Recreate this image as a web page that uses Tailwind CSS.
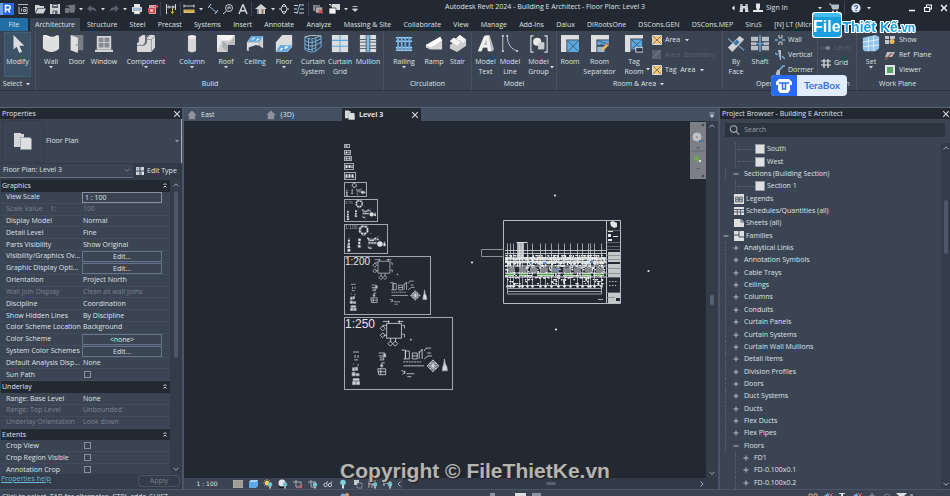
<!DOCTYPE html>
<html lang="en">
<head>
<meta charset="utf-8">
<title>Autodesk Revit 2024</title>
<script src="https://cdn.jsdelivr.net/npm/@tailwindcss/browser@4"></script>
</head>
<body class="h-screen overflow-hidden bg-[#3b4453] text-[7px] leading-[10px] text-[#dfe2e6] font-['Open_Sans','Noto_Sans',sans-serif]">
<svg class="hidden">
  <defs>
    <symbol id="caret" viewBox="0 0 8 8"><path d="M2 3h4L4 5.500z" fill="#d5d8dc"/></symbol>
    <symbol id="x" viewBox="0 0 8 8"><path d="M1.200 1.200l5.600 5.600M6.800 1.200L1.200 6.800" stroke="#d5d8dc" stroke-width="1.100"/></symbol>
    <symbol id="up" viewBox="0 0 8 8"><path d="M1.500 5.300L4 2.800l2.500 2.500" fill="none" stroke="#a5adb8" stroke-width="1"/></symbol>
    <symbol id="down" viewBox="0 0 8 8"><path d="M1.500 2.800L4 5.300l2.500-2.500" fill="none" stroke="#a5adb8" stroke-width="1"/></symbol>
    <symbol id="collapse" viewBox="0 0 8 8"><path d="M2.500 3L4 1.500 5.500 3M2.500 5.500L4 4l1.500 1.500" fill="none" stroke="#d5d8dc" stroke-width="1"/></symbol>
    <symbol id="house" viewBox="0 0 10 10"><path d="M5 .5L.3 5h1.500v4.200h6.400V5h1.500z" fill="#8d939c"/></symbol>
    <symbol id="plan" viewBox="0 0 18 18"><path d="M0 1h7v1h3v13H0z" fill="#d4d5d7"/><path d="M6.500 5.500H16l1.500 1.500v10.500h-11z" fill="#dedfe0" stroke="#8d939c" stroke-dasharray="1.500 1"/></symbol>
    <symbol id="area" viewBox="0 0 10 10"><path d="M.5.5h9v9h-9z" fill="#efc77c" stroke="#d9dbde"/><path d="M1 1l8 8M9 1L1 9" stroke="#7d6a45" stroke-width=".8"/></symbol>
    <symbol id="bulb" viewBox="0 0 10 10"><circle cx="7" cy="5.500" r="2.300" fill="#6ec3d0"/><path d="M6.300 7.500h1.500v2H6.300z" fill="#d8dadd"/></symbol>
    <symbol id="sheet" viewBox="0 0 108 73">
      <g fill="none" stroke="#d9dcdf" stroke-width=".8">
        <path d="M42 6h15v15H42zM44 3v3M55 3v3M38 4h7M53 4h6M58 8h2v3M58 17h2v3M42 8h-4v1M42 18h-3M46 21v4M51 21v4"/>
        <path d="M38 8.500l2.500 2.500-2.500 2.500-2.500-2.500zM38 15.500l2.500 2.500-2.500 2.500-2.500-2.500zM45.700 24l2.500 2.500-2.500 2.500-2.500-2.500zM50.700 24l2.500 2.500-2.500 2.500-2.500-2.500z"/>
        <path d="M57 33h4v9h-2M61 34h4v8h-4zM68 36h5v6h-5zM68 39h5M75 34v8M75 36l3-4v10M80 34l2-3h5M80 42l4-3h4M83 36h4M57 54l4 1-3 3M62 57h8M63 60h4M60 55v2"/>
        <path d="M59 45h18" stroke-dasharray="2 .7"/><path d="M59 49h21"/>
        <path d="M8 35h6M10 38v3M13 38v3M9 43h4M8 47h1M13 47v2"/>
        <path d="M34 36h6v3h-6M35 41h4v2h-4M40 46h-3v3M33 52h8v6h-7zM36 52v6M33 55h8"/>
        <path d="M89 43l6 6-6 6-6-6zM86 46h6v6h-6zM89 43v12M83 49h12M86 52l6-6M86 46l6 6"/>
      </g>
      <path d="M7.500 51h2v3h-2zM10.500 50.500h2v3h-2zM7 56h3v3H7zM11 57h3v2h-3zM8 62h6v2H8zM7.500 65h3v3h-3zM11.500 65h3v3h-3zM36 48h2v2h-2zM39 37h2v3h-2zM87.500 47h3v4h-3zM100.500 42l1 5 1.500 3 .5 4h-5l.5-4 1-3zM66 22h1v1h-1z" fill="#d9dcdf"/>
    </symbol>
  </defs>
</svg>

<div class="flex h-full flex-col">
  <!-- Title bar -->
  <header class="flex h-[18px] shrink-0 items-center bg-[#222933]">
    <div class="flex w-[360px] shrink-0 items-center">
      <button class="w-[15px]" aria-label="Revit menu"><svg class="h-3.5 w-3.5" viewBox="0 0 14 14"><path d="M0 1h14v12H0z" fill="#2469e0"/><path d="M0 1h3v12H0z" fill="#6aa0f0"/><path d="M5.500 10.500v-7h2.700a2 2 0 010 4H5.500M8 7.500l2 3" fill="none" stroke="#fff" stroke-width="1.500"/></svg></button>
      <button class="mr-0.5 flex w-[15px] justify-center" aria-label="Home"><svg class="h-3 w-3" viewBox="0 0 12 12" fill="none" stroke="#b5bac1"><path d="M1 1.500h10M2 3.500v7h8v-6H6M4.500 5.500v3M6.500 6.500h2v2h-2z"/></svg></button>
      <button class="flex w-[15px] justify-center" aria-label="Open"><svg class="h-3 w-3" viewBox="0 0 12 12" fill="#cfd1d4"><path d="M1 2h4l1 1h4v2H3.500L1 10z"/><path d="M4 5.500h8L9.500 10.500H1.500z"/></svg></button>
      <button class="flex w-[15px] justify-center" aria-label="Save"><svg class="h-3 w-3" viewBox="0 0 12 12"><path d="M1 1h10v10H1z" fill="#cfd1d4"/><path d="M3 1h6v4H3zM3.500 7.500h5V11h-5z" fill="#5d636c"/><path d="M4 2h4v1H4zM4.500 8.500h1.500V11H4.500z" fill="#cfd1d4"/></svg></button>
      <button class="flex w-[15px] justify-center" aria-label="Synchronize"><svg class="h-3 w-3" viewBox="0 0 12 12" fill="#6f757f"><path d="M1 5h4v5H1zM5 2h5v3H5z"/><circle cx="8" cy="7" r="3"/><path d="M10 1l1 5M2 3h3" stroke="#6f757f"/></svg></button>
      <svg class="h-2 w-2"><use href="#caret"/></svg>
      <button class="flex w-3.5 justify-center" aria-label="Undo"><svg class="h-2.5 w-2.5" viewBox="0 0 10 10"><path d="M4 1L0 4.500 4 8V5.800c3 0 4 .7 5.500 2.200C9.500 5 7.500 3.300 4 3.200z" fill="#5b626d"/></svg></button>
      <svg class="h-2 w-2"><use href="#caret"/></svg>
      <button class="flex w-3.5 justify-center" aria-label="Redo"><svg class="h-2.5 w-2.5" viewBox="0 0 10 10"><path d="M6 1l4 3.500L6 8V5.800c-3 0-4 .7-5.500 2.200C.5 5 2.500 3.300 6 3.200z" fill="#5b626d"/></svg></button>
      <svg class="h-2 w-2"><use href="#caret"/></svg>
      <button class="flex w-4 justify-center" aria-label="Print"><svg class="h-3 w-3" viewBox="0 0 12 12"><path d="M3 1h6v3H3z" fill="#e6e6e6"/><path d="M1 4h10v5H1z" fill="#d2d4d6"/><path d="M2 5.500h8v1H2z" fill="#4fa5dd"/><path d="M3 7.500h6V11H3z" fill="#f2f2f2" stroke="#888" stroke-width=".5"/></svg></button>
      <button class="flex w-[15px] justify-center" aria-label="Export PDF"><svg class="h-3 w-3" viewBox="0 0 12 12"><path d="M2 2h7v9H2z" fill="#d9a0a4"/><path d="M1 5h7v5H1z" fill="#d04b54"/><path d="M3 6.500h3v2H3z" fill="#f0d5d7"/><path d="M7 3.500h4M9 1.500l2 2-2 2" stroke="#e05a62" fill="none"/></svg></button>
      <i class="mr-px h-3.5 w-px bg-[#3b4453]"></i>
      <button class="flex w-[18px] justify-center" aria-label="Measure"><svg class="h-3 w-3" viewBox="0 0 12 12" fill="none" stroke="#cfd1d4"><path d="M1.500 1v10M10.500 1v6M2 4h8M8 2.500v3M4 2.500v3"/><path d="M7.500 5v5M6 8.500l1.500 2L9 8.500" stroke="#e0b25a"/></svg></button>
      <i class="h-3.5 w-px bg-[#3b4453]"></i>
      <button class="flex w-4 justify-center" aria-label="Ruler"><svg class="h-3 w-3" viewBox="0 0 12 12"><path d="M1 3h10M1 1.500v3M11 1.500v3" stroke="#cfd1d4"/><path d="M.5 6.500h11v3.500H.5z" fill="#e6bd68"/><path d="M3 7v1.500M5 7v1.500M7 7v1.500M9 7v1.500" stroke="#7a5c20" stroke-width=".6"/></svg></button>
      <svg class="h-2 w-2"><use href="#caret"/></svg>
      <button class="flex w-[15px] justify-center" aria-label="Aligned dimension"><svg class="h-3 w-3" viewBox="0 0 12 12" fill="none"><path d="M2.500 3.500l7 6" stroke="#7db6df"/><path d="M1 5l3-4M8 11l3-4" stroke="#cfd1d4"/></svg></button>
      <button class="flex w-[15px] justify-center" aria-label="Tag"><svg class="h-3 w-3" viewBox="0 0 12 12" fill="none" stroke="#cfd1d4"><circle cx="7" cy="5" r="3.500"/><path d="M6 6.500V4h2v2M4.500 8L1 11"/></svg></button>
      <button class="flex w-[15px] justify-center" aria-label="Text"><svg class="h-3 w-3" viewBox="0 0 12 12" fill="none" stroke="#d5d8dc" stroke-width="1.400"><path d="M2 11l3.700-9h.6L10 11M3.500 7.800h5"/></svg></button>
      <i class="mx-px h-3.5 w-px bg-[#3b4453]"></i>
      <button class="flex w-4 justify-center" aria-label="Default 3D view"><svg class="h-3 w-3" viewBox="0 0 12 12"><path d="M6 1L0 6h2v5h8V6h2z" fill="#cfd1d4"/><path d="M6.500 6h2v5h-2z" fill="#a4753d"/><path d="M2 6h2v5H2z" fill="#888d95"/></svg></button>
      <svg class="h-2 w-2"><use href="#caret"/></svg>
      <button class="flex w-3.5 justify-center" aria-label="Section"><svg class="h-3 w-3" viewBox="0 0 12 12" fill="none" stroke="#cfd1d4"><circle cx="6" cy="6" r="3"/><path d="M6 1l2 2M6 1L4 3M4 9l2 2 2-2M1 6h2M9 6h2"/></svg></button>
      <button class="flex w-4 justify-center" aria-label="Thin lines"><svg class="h-3 w-3" viewBox="0 0 12 12" fill="none" stroke="#cfd1d4"><path d="M1 2.500h4M1 6h3M1 9.500h4M6 2h5M7 6h4M6 10h5" /><path d="M7 1L4 11" stroke="#7db6df"/></svg></button>
      <i class="mx-px h-3.5 w-px bg-[#3b4453]"></i>
      <button class="flex w-4 justify-center" aria-label="Close inactive views"><svg class="h-3 w-3" viewBox="0 0 12 12"><path d="M1 2h7v6H1z" fill="#7e848c"/><path d="M3.500 4h7v6h-7z" fill="#a9adb3" stroke="#222933" stroke-width=".6"/><path d="M6.500 6.500l4 4M10.500 6.500l-4 4" stroke="#dc4c4c" stroke-width="1.300"/></svg></button>
      <button class="flex w-4 justify-center" aria-label="Switch windows"><svg class="h-3 w-3" viewBox="0 0 12 12"><path d="M4 1h8v6H4z" fill="#d9dbdd"/><path d="M1 5h7v6H1z" fill="#f2f2f2" stroke="#222933" stroke-width=".7"/><path d="M1 1.500h2v2" stroke="#d9dbdd" fill="none"/></svg></button>
      <svg class="h-2 w-2"><use href="#caret"/></svg>
      <svg class="h-2.5 w-2.5" viewBox="0 0 10 10"><path d="M2.500 2.500h5M2.500 5h5L5 7.500z" stroke="#d5d8dc" fill="#d5d8dc" stroke-width=".8"/></svg>
    </div>
    <h1 class="flex-1 pb-1 text-center whitespace-nowrap">Autodesk Revit 2024 - Building E Architect - Floor Plan: Level 3</h1>
    <div class="flex w-[220px] shrink-0 items-center pb-0.5">
      <svg class="h-2 w-2" viewBox="0 0 8 8"><path d="M4.500 1.500v5L2 4z" fill="#fff"/></svg>
      <button class="flex w-3 justify-center" aria-label="Search help"><svg class="h-2.5 w-2.5" viewBox="0 0 10 10" fill="#cfd1d4"><path d="M1.500 1h2v2h3V1h2l1 8H6V5.500H4V9H.500z"/></svg></button>
      <button class="ml-0.5 flex items-center gap-0.5"><svg class="h-3 w-3" viewBox="0 0 12 12" fill="#e4e5e7"><path d="M4 1.500h4v4L7 8h4v2H1V8h4L4 5.500z"/></svg>Sign In</button>
      <svg class="ml-7 h-2 w-2"><use href="#caret"/></svg>
      <button class="ml-1 flex w-3 justify-center" aria-label="App store"><svg class="h-2.5 w-2.5" viewBox="0 0 10 10"><path d="M0 1h2l1.500 5H9l1-4H3" fill="#a9bcd0" stroke="#cfd1d4" stroke-width=".8"/><circle cx="4" cy="8.500" r="1" fill="#cfd1d4"/><circle cx="8" cy="8.500" r="1" fill="#cfd1d4"/></svg></button>
      <i class="ml-1 h-3.5 w-px bg-[#3b4453]"></i>
      <button class="ml-1.5 flex w-2.5 justify-center" aria-label="Help"><svg class="h-2.5 w-2.5" viewBox="0 0 10 10"><circle cx="5" cy="5" r="4.600" fill="#dfe7f2"/><path d="M3.500 4a1.500 1.500 0 113 0c0 1-1.500 1-1.500 2.200M5 7v1.200" fill="none" stroke="#33558c" stroke-width="1.200"/></svg></button>
      <svg class="ml-1 h-2 w-2"><use href="#caret"/></svg>
      <div class="ml-auto flex items-center gap-2 pr-0.5">
        <button aria-label="Minimize"><svg class="h-2 w-2" viewBox="0 0 8 8"><path d="M1 6.500h6" stroke="#fff" stroke-width="1.500"/></svg></button>
        <button aria-label="Restore"><svg class="h-2 w-2" viewBox="0 0 8 8"><path d="M.6 3.500h5v4h-5zM2.500 3V1h5v4H6" fill="none" stroke="#fff" stroke-width="1.100"/></svg></button>
        <button aria-label="Close"><svg class="h-2 w-2" viewBox="0 0 8 8"><path d="M1 1l6 6M7 1L1 7" stroke="#fff" stroke-width="1.300"/></svg></button>
      </div>
    </div>
  </header>

  <!-- Ribbon tabs -->
  <nav class="flex h-[13px] shrink-0 items-stretch bg-[#222933] leading-[13px] whitespace-nowrap">
    <button class="mr-0.5 w-7 bg-[#1f6ea6]">File</button>
    <button class="w-[50px] bg-[#3b4453]">Architecture</button>
    <div class="flex w-[738px] justify-between pl-[7px]">
      <button>Structure</button>
      <button>Steel</button>
      <button>Precast</button>
      <button>Systems</button>
      <button>Insert</button>
      <button>Annotate</button>
      <button>Analyze</button>
      <button>Massing &amp; Site</button>
      <button>Collaborate</button>
      <button>View</button>
      <button>Manage</button>
      <button>Add-Ins</button>
      <button>Dalux</button>
      <button>DiRootsOne</button>
      <button>DSCons.GEN</button>
      <button>DSCons.MEP</button>
      <button>SiruS</button>
      <button>[N] LT (Micro)</button>
    </div>
  </nav>

  <!-- Ribbon -->
  <section class="flex h-[60px] shrink-0 border-b border-[#2c343f] whitespace-nowrap">
    <div class="flex w-[36px] shrink-0 flex-col border-r border-[#4a5362]">
      <div class="flex min-h-0 flex-1 justify-center pt-px">
        <button class="flex w-[27px] flex-col items-center border border-[#456076] bg-[#3c5266] pt-0.5"><svg class="h-[18px] w-[18px]" viewBox="0 0 20 20"><path d="M5 0v16l3.500-3 3 7 3-1.300-3-6.700H17z" fill="#dcdddf"/></svg>
        <span class="mt-1">Modify</span></button>
      </div>
      <button class="flex h-[13px] shrink-0 items-center justify-center gap-0.5">Select <svg class="h-2 w-2"><use href="#caret"/></svg></button>
    </div>

    <div class="flex shrink-0 flex-col border-r border-[#4a5362] pl-px">
      <div class="flex min-h-0 flex-1 items-start pt-1">
        <button class="flex w-7 flex-col items-center"><svg class="h-[18px] w-[18px]" viewBox="0 0 20 20"><path d="M1 0c4 3 13 4 18 1v14c-4 5-13 5-18 0z" fill="#dedfe0"/><path d="M1 0l3-.5C9 3 14 2.500 17 0l2 1C14 4 6 4 1 0z" fill="#fff"/></svg><span class="mt-1">Wall</span><svg class="-mt-1 h-2 w-2"><use href="#caret"/></svg></button>
        <button class="flex w-6 flex-col items-center"><svg class="h-[18px] w-[18px]" viewBox="0 0 20 20"><path d="M3 0h14v17H3z" fill="#7a7f86"/><path d="M3 0l8 3v17l-8-3z" fill="#dedfe0"/><circle cx="9.500" cy="11" r=".8" fill="#666"/></svg><span class="mt-1">Door</span></button>
        <button class="flex w-[30px] flex-col items-center"><svg class="h-[18px] w-[18px]" viewBox="0 0 20 20"><path d="M2 1h16v15H2zM0 16.500h20V19H0z" fill="#d2d3d5"/><path d="M4 3h5.500v5H4zM10.500 3H16v5h-5.500zM4 9h5.500v5H4zM10.500 9H16v5h-5.500z" fill="#868b93"/></svg><span class="mt-1">Window</span></button>
        <button class="flex w-[54px] flex-col items-center"><svg class="h-[18px] w-[18px]" viewBox="0 0 20 20"><path d="M2 3l4-3h3v8l-2 3H0V9l2-1zM11 3l3-3h5l1 1v13l-4 5H1l-1-1v-6h8l3-3z" fill="#d8d9db"/><path d="M0 11.500h7.500l2.500-3V2l2-2M20 1l-4 4h-5M16 5v14" fill="none" stroke="#8d9299"/></svg><span class="mt-1">Component</span><svg class="-mt-1 h-2 w-2"><use href="#caret"/></svg></button>
        <button class="flex w-[38px] flex-col items-center"><svg class="h-[18px] w-[18px]" viewBox="0 0 20 20"><path d="M5.500 2v15c1 3 8 3 9 0V2z" fill="#d6d7d9"/><ellipse cx="10" cy="2" rx="4.500" ry="2" fill="#efefef"/></svg><span class="mt-1">Column</span><svg class="-mt-1 h-2 w-2"><use href="#caret"/></svg></button>
        <button class="flex w-[30px] flex-col items-center"><svg class="h-[18px] w-[18px]" viewBox="0 0 20 20"><path d="M0 0h20v11h-8v8H0z" fill="#cbccce"/><path d="M0 0l6 6-6 13z" fill="#e9e9ea"/><path d="M0 0h20l-5 6H6z" fill="#f6f6f6"/><path d="M6 6l6 5v8l-6-5z" fill="#aeb0b3"/><path d="M20 0v11h-8z" fill="#b9bbbe"/></svg><span class="mt-1">Roof</span><svg class="-mt-1 h-2 w-2"><use href="#caret"/></svg></button>
        <button class="flex w-7 flex-col items-center"><svg class="h-[18px] w-[18px]" viewBox="0 0 20 20"><path d="M1 8l5-7h13v14l-4-3V8z" fill="#cfd0d2"/><path d="M1 8h14v4l-4-1-8 3v4l-2-1z" fill="#dedfe0"/><path d="M2 7.500L6.500 1H19l-4 6.500z" fill="#63a9dc"/><path d="M6 5l2-2h2L8 5zM11 6l2-2h2l-2 2z" fill="#fff"/></svg><span class="mt-1">Ceiling</span></button>
        <button class="flex w-[30px] flex-col items-center"><svg class="h-[18px] w-[18px]" viewBox="0 0 20 20"><path d="M1 8l7-8h11v13l-5 6H1z" fill="#dcdddf"/><path d="M1 18.500l4.500-7H19l-5 7z" fill="#63a9dc"/><path d="M5 17l2-2.500h2L7 17zM10 15l2-2.500h3L13 15z" fill="#fff"/></svg><span class="mt-1">Floor</span><svg class="-mt-1 h-2 w-2"><use href="#caret"/></svg></button>
        <button class="flex w-7 flex-col items-center"><svg class="h-[18px] w-[18px]" viewBox="0 0 20 20" fill="none" stroke="#7dbbe8"><path d="M1 2c4 3 8 3 12 1l6-2v12l-6 5c-4 1.500-8 1-12-2zM1 6c4 3 8 3 12 1M1 10c4 3 8 3 12 1M1 14c4 3 8 3 12 0M5 4v13M9 5v13M13 3v15M13 7l6-3M13 11l6-3"/><path d="M1 2l7-1.500L19 1" stroke="#cfd1d4"/></svg><span class="mt-1">Curtain<br>System</span></button>
        <button class="flex w-[26px] flex-col items-center"><svg class="h-[18px] w-[18px]" viewBox="0 0 20 20"><path d="M1 0h18v19H1z" fill="#dcdddf"/><path d="M1 6h18M1 12.500h18M10 0v19" stroke="#5fa8dc" stroke-width="1.200"/></svg><span class="mt-1">Curtain<br>Grid</span></button>
        <button class="flex w-[30px] flex-col items-center"><svg class="h-[18px] w-[18px]" viewBox="0 0 20 20"><path d="M1 0h18v19H1z" fill="#dcdddf"/><path d="M1 5h18M1 8h18M1 12h18M1 15h18" stroke="#4c5a69"/><path d="M8 0h4v19H8z" fill="#7dbbe8"/><path d="M8 0v19M12 0v19" stroke="#39485a" stroke-width=".8"/></svg><span class="mt-1">Mullion</span></button>
      </div>
      <div class="h-[13px] shrink-0 text-center leading-[13px]">Build</div>
    </div>

    <div class="flex shrink-0 flex-col border-r border-[#4a5362]">
      <div class="flex min-h-0 flex-1 items-start pt-1">
        <button class="flex w-10 flex-col items-center"><svg class="h-[18px] w-[18px]" viewBox="0 0 20 20"><path d="M1 3h18M1 7h18M1 14h18M1 17h18" stroke="#a9d2f2" stroke-width="1.800"/><path d="M3.500 2v16M7.500 2v16M11.500 2v16M16 2v16" stroke="#6ab0e4" stroke-width="2"/></svg><span class="mt-1">Railing</span><svg class="-mt-1 h-2 w-2"><use href="#caret"/></svg></button>
        <button class="flex w-5 flex-col items-center"><svg class="h-[18px] w-[18px]" viewBox="0 0 20 20"><path d="M1 11L17 2l2 4v10H6l-5-2z" fill="#d2d3d5"/><path d="M1 11L17 2l2 4L6 14z" fill="#fff"/></svg><span class="mt-1">Ramp</span></button>
        <button class="flex w-[27px] flex-col items-center"><svg class="h-[18px] w-[18px]" viewBox="0 0 20 20"><path d="M1 7l4-4 3 1 4-4 7 5v7l-10 7-8-4v-4l3-2z" fill="#cbccce"/><path d="M1 7l4-4 8 5-4 4zM8 3.500l4-3.500 7 5-3 3.500z" fill="#f2f2f2"/></svg><span class="mt-1">Stair</span></button>
      </div>
      <div class="h-[13px] shrink-0 text-center leading-[13px]">Circulation</div>
    </div>

    <div class="flex shrink-0 flex-col border-r border-[#4a5362]">
      <div class="flex min-h-0 flex-1 items-start pt-1">
        <button class="flex w-[27px] flex-col items-center"><svg class="h-[18px] w-[18px]" viewBox="0 0 20 20"><path d="M1 18L8 1l2-1h4l5 16-2 2h-4l-1-4H7l-2 4z" fill="#b4b7bb"/><path fill-rule="evenodd" d="M1 18L8 1h5l3 17h-4l-.6-4H6.500L5 18zM7.800 11h3.200l-.6-6z" fill="#f0f0f1"/></svg><span class="mt-1">Model<br>Text</span></button>
        <button class="flex w-[22px] flex-col items-center"><svg class="h-[18px] w-[18px]" viewBox="0 0 20 20" fill="none" stroke="#cfd1d4"><path d="M2 1v18M7 1c0 9 4 15 12 17"/><path d="M1 0h2v2H1zM1 17h2v2H1zM6 0h2v2H6zM17 17h2v2h-2z" fill="#cfd1d4" stroke="none"/></svg><span class="mt-1">Model<br>Line</span></button>
        <button class="relative flex w-[35px] flex-col items-center"><svg class="h-[18px] w-[18px]" viewBox="0 0 20 20"><path d="M4 1H1v18h3M16 1h3v18h-3" fill="none" stroke="#dedfe0" stroke-width="1.200"/><circle cx="8" cy="7.500" r="4.500" fill="#e9e9ea"/><path d="M9 8h7v8H9z" fill="#cbccce"/></svg><span class="mt-1">Model<br>Group</span><svg class="absolute right-0 bottom-1.5 h-2 w-2"><use href="#caret"/></svg></button>
      </div>
      <div class="h-[13px] shrink-0 text-center leading-[13px]">Model</div>
    </div>

    <div class="flex shrink-0 flex-col border-r border-[#4a5362]">
      <div class="flex min-h-0 flex-1 items-start pt-1">
        <button class="flex w-[26px] flex-col items-center"><svg class="h-[18px] w-[18px]" viewBox="0 0 20 20"><path d="M0 0h6v19H0zM6 0h14v5H6zM12 0v5" fill="#dcdddf"/><path d="M7 6h13v13H7z" fill="#5fa8dc"/><path d="M7 6l13 13M20 6L7 19" stroke="#34587a"/></svg><span class="mt-1">Room</span></button>
        <button class="flex w-[33px] flex-col items-center"><svg class="h-[18px] w-[18px]" viewBox="0 0 20 20"><path d="M0 0h6v19H0zM6 0h14v5H6z" fill="#dcdddf"/><path d="M7 6h13v5H7z" fill="#5fa8dc"/><path d="M7 6l13 5M7 13l6-3" stroke="#34587a"/><path d="M7 13h8v6H7z" fill="#8fb8d8"/><path d="M11 18l1-3 6-6 2 2-6 6z" fill="#e9b95a"/><path d="M17 10l1.500-1.500 2 2L19 12z" fill="#d0564a"/></svg><span class="mt-1">Room<br>Separator</span></button>
        <button class="relative flex w-9 flex-col items-center"><svg class="h-[18px] w-[18px]" viewBox="0 0 20 20"><path d="M0 0h6v19H0zM6 0h14v4H6z" fill="#dcdddf"/><path d="M7 5h12v11H7z" fill="#5fa8dc"/><path d="M7 5l12 11M19 5L7 16" stroke="#34587a"/><path d="M12 14h8v5h-8z" fill="#2c343f" stroke="#dcdddf"/></svg><span class="mt-1">Tag<br>Room</span><svg class="absolute right-0 bottom-1 h-2 w-2"><use href="#caret"/></svg></button>
        <div class="flex w-[70px] flex-col gap-[5px]">
          <button class="flex items-center gap-[3px]"><svg class="h-2.5 w-2.5"><use href="#area"/></svg>Area <svg class="h-2 w-2"><use href="#caret"/></svg></button>
          <button disabled class="flex items-center gap-[3px] text-[#59616e]"><svg class="h-2.5 w-2.5" viewBox="0 0 10 10"><path d="M0 0h9v9H0z" fill="#59616e"/><path d="M1 8l7-7" stroke="#7a818b"/></svg>Area&nbsp; Boundary</button>
          <button class="flex items-center gap-[3px]"><svg class="h-2.5 w-2.5"><use href="#area"/></svg>Tag&nbsp; Area <svg class="h-2 w-2"><use href="#caret"/></svg></button>
        </div>
      </div>
      <button class="flex h-[13px] shrink-0 items-center justify-center gap-0.5">Room &amp; Area <svg class="h-2 w-2"><use href="#caret"/></svg></button>
    </div>

    <div class="flex shrink-0 flex-col border-r border-[#4a5362]">
      <div class="flex min-h-0 flex-1 items-start pt-1">
        <button class="flex w-[26px] flex-col items-center"><svg class="h-[18px] w-[18px]" viewBox="0 0 20 20"><path d="M1 14L14 1l5 4L6 19z" fill="#cfd0d2"/><path d="M7 9l3 3 4-4-3-3z" fill="#3a78a8"/><path d="M1 4l6 5M13 12l6 5" stroke="#6e97b8" stroke-width="1.500"/></svg><span class="mt-1">By<br>Face</span></button>
        <button class="flex w-[22px] flex-col items-center"><svg class="h-[18px] w-[18px]" viewBox="0 0 20 20"><path d="M0 2h8v5H0zM12 2h8v5h-8zM0 12h8v5H0zM12 12h8v5h-8zM0 8h6v3H0zM14 8h6v3h-6z" fill="#b9bcc1"/><path d="M10 0v19M5 9.500h10" stroke="#6fb2e2" stroke-width="1.500"/></svg><span class="mt-1">Shaft</span></button>
        <div class="flex w-[46px] flex-col gap-[5px] pl-1">
          <button class="flex items-center gap-[3px]"><svg class="h-2.5 w-2.5" viewBox="0 0 10 10" fill="none"><path d="M4 0v3h3V0M4 10V7h3v3" stroke="#cfd1d4"/><path d="M0 5h3M7 5h3" stroke="#6fb2e2" stroke-width="1.500"/></svg>Wall</button>
          <button class="flex items-center gap-[3px]"><svg class="h-2.5 w-2.5" viewBox="0 0 10 10"><path d="M3 0h3v10H5z" fill="#b9bcc1"/><path d="M0 3l3 2M7 6l3 3" stroke="#6fb2e2" stroke-width="1.500"/></svg>Vertical</button>
          <button class="flex items-center gap-[3px]"><svg class="h-2.5 w-2.5" viewBox="0 0 10 10"><path d="M1 9l7-8h2" fill="none" stroke="#6fb2e2" stroke-width="1.500"/><path d="M2 5h3v5H1z" fill="#b9bcc1"/></svg>Dormer</button>
        </div>
      </div>
      <div class="h-[13px] shrink-0 text-center leading-[13px]">Opening</div>
    </div>

    <div class="flex w-[39px] shrink-0 flex-col border-r border-[#4a5362] pl-[3px]">
      <div class="flex min-h-0 flex-1 flex-col gap-[5px] pt-3">
        <button disabled class="flex items-center gap-[3px] text-[#59616e]"><svg class="h-2.5 w-2.5" viewBox="0 0 10 10"><path d="M0 5h5" stroke="#6b727d" stroke-dasharray="2 1"/><circle cx="7" cy="5" r="2.300" fill="#7a818b"/></svg>Level</button>
        <button class="flex items-center gap-[3px]"><svg class="h-2.5 w-2.5" viewBox="0 0 10 10" stroke="#e4e5e7" fill="none"><path d="M3 1v9M7 1v9M0 3h10M0 7h10" stroke-width="1.200"/></svg>Grid</button>
      </div>
      <div class="h-[13px] shrink-0 text-center leading-[13px]">Datum</div>
    </div>

    <div class="flex flex-1 flex-col">
      <div class="flex min-h-0 flex-1 items-start pt-1">
        <button class="flex w-7 flex-col items-center"><svg class="h-[18px] w-[18px]" viewBox="0 0 20 20"><path d="M1 3l14-3 4 2v13l-4 3H3L1 16z" fill="#8fc3ea"/><path d="M1 8l18-3M1 13l18-2M7 2v16M13 1v17" stroke="#e6f1fa"/></svg><span class="mt-1">Set</span><svg class="-mt-1 h-2 w-2"><use href="#caret"/></svg></button>
        <div class="flex flex-col gap-[5px]">
          <button class="flex items-center gap-1"><svg class="h-2.5 w-2.5" viewBox="0 0 10 10"><path d="M0 1h4v3H0zM5 1h5v3H5zM0 5h4v4H0z" fill="#c3c6ca"/><circle cx="7" cy="6.500" r="2.500" fill="#e9b95a"/></svg>Show</button>
          <button class="flex items-center gap-1"><svg class="h-2.5 w-2.5" viewBox="0 0 10 10"><path d="M2 2h8L7 7H0z" fill="#b9bcc1"/><path d="M0 10l7-7" stroke="#b05a4a" stroke-width="1.300"/></svg>Ref&nbsp; Plane</button>
          <button class="flex items-center gap-1"><svg class="h-2.5 w-2.5" viewBox="0 0 10 10"><path d="M0 0h10v10H0z" fill="#e4e5e7"/><path d="M2 2h6v6H2z" fill="#5ba368"/></svg>Viewer</button>
        </div>
      </div>
      <div class="h-[13px] shrink-0 pr-3 text-center leading-[13px]">Work Plane</div>
    </div>
  </section>

  <div class="h-4 shrink-0"></div>

  <!-- Workspace -->
  <main class="flex min-h-0 flex-1 border-t border-[#5a6475]">
    <!-- Properties -->
    <aside class="flex w-[184px] shrink-0 flex-col border-r-2 border-[#4b5567]">
      <div class="flex h-[11px] shrink-0 items-center justify-between bg-[#222933] pr-px pl-0.5"><h2>Properties</h2><button aria-label="Close properties"><svg class="h-2 w-2"><use href="#x"/></svg></button></div>
      <div class="flex h-11 shrink-0 items-center border-r border-[#aab1bb] pl-0.5">
        <div class="flex h-[42px] w-[42px] items-center justify-center border border-[#353d4a]"><svg class="h-[18px] w-[18px]"><use href="#plan"/></svg></div>
        <span class="ml-0.5 flex-1">Floor Plan</span>
        <svg class="h-2 w-2 opacity-60"><use href="#caret"/></svg>
      </div>
      <div class="flex h-[17px] shrink-0 items-center gap-[3px] bg-[#323a47] pb-0.5">
        <button class="flex h-[14px] w-[133px] items-center justify-between border-b border-[#6b7483] bg-[#3b4453] pr-0.5 pl-[3px]">Floor Plan: Level 3 <svg class="h-2 w-2 opacity-60"><use href="#down"/></svg></button>
        <button class="flex items-center gap-[3px] whitespace-nowrap"><svg class="h-2 w-2" viewBox="0 0 8 8"><path d="M0 0h3.500v3.500H0zM4.500 0H8v3.500H4.500zM0 4.500h3.500V8H0z" fill="#cfd3d8"/><path d="M4.500 4.500H8V8H4.500z" fill="#dfe2e6"/><path d="M5.500 5v3M1 1h1v1" stroke="#5fa8dc"/></svg>Edit Type</button>
      </div>
      <div class="flex min-h-0 flex-1">
        <div id="props" class="-mb-0.5 ml-px grid min-h-0 w-[169px] auto-rows-fr overflow-hidden [clip-path:inset(0_0_2px_0)] whitespace-nowrap"></div>
        <div class="flex flex-1 flex-col items-center bg-[#343c49] py-px">
          <svg class="h-2 w-2"><use href="#up"/></svg>
          <div class="mt-0.5 h-[167px] w-1 rounded-full bg-[#4c586a]"></div>
          <svg class="mt-auto h-2 w-2"><use href="#down"/></svg>
        </div>
      </div>
      <div class="flex h-[15px] shrink-0 items-start justify-between bg-[#343c49] pr-0.5">
        <a href="#" class="pl-px text-[#6cb8dc] underline">Properties help</a>
        <button disabled class="mt-px h-3 w-[42px] rounded-sm border border-[#4b5463] leading-[10px] text-[#7b838f]">Apply</button>
      </div>
    </aside>

    <!-- Drawing area -->
    <section class="flex min-w-0 flex-1 flex-col bg-[#222933]">
      <div class="flex h-[13px] shrink-0 items-stretch bg-[#454f62]">
        <button class="flex w-[79px] items-center gap-1 pl-[3px]"><svg class="h-2.5 w-2.5"><use href="#house"/></svg>East</button>
        <button class="flex w-[79px] items-center gap-1 pl-[3px]"><svg class="h-2.5 w-2.5"><use href="#house"/></svg>{3D}</button>
        <div class="flex w-[79px] items-center bg-[#222933] pr-0.5 pl-[3px] font-bold"><svg class="mr-1 h-2.5 w-2.5"><use href="#plan"/></svg><span class="flex-1">Level 3</span><button aria-label="Close view"><svg class="h-2 w-2"><use href="#x"/></svg></button></div>
        <button class="ml-auto px-0.5" aria-label="View list"><svg class="h-2 w-2" viewBox="0 0 8 8"><path d="M1.500 2h5M2 4h4L4 6.500z" fill="#c5c9cf" stroke="#c5c9cf" stroke-width=".8"/></svg></button>
      </div>
      <div class="relative flex min-h-0 flex-1">
        <svg id="canvas" class="h-full min-w-0 flex-1" viewBox="184 121 522 357" preserveAspectRatio="xMinYMin meet" role="img" aria-label="Level 3 floor plan sheets">
          <g id="sheets" fill="none" stroke="#a3a8ae"></g>
          <g fill="#e2e4e6" class="font-['Liberation_Sans',sans-serif]"><text x="345" y="265" font-size="10">1:200</text><text x="345" y="328" font-size="12">1:250</text><text x="345" y="229" font-size="5" opacity=".6">1:100</text><text x="345" y="204" font-size="4" opacity=".6">1:75</text></g>
          <g id="building"></g>
        </svg>
        <div class="absolute top-px right-3 flex h-[57px] w-4 flex-col items-center bg-[#7c8086]">
          <svg class="h-full w-full" viewBox="0 0 16 57"><circle cx="13" cy="3" r="1.300" fill="#444a53"/><circle cx="7" cy="15" r="4" fill="#9a9ea3" stroke="#c9ccd0"/><path d="M5 13h4v4H5z" fill="none" stroke="#dfe1e3"/><path d="M9 19h5" stroke="#56779c" stroke-width="2"/><path d="M6 25h4l-2 2zM6 46h4l-2 2z" fill="#5b6068"/><path d="M1 29h14" stroke="#61666e"/><path d="M4 34h5v5H4z" fill="#71a05c"/><path d="M9 38h2v2H9z" fill="#e4e5e7"/><circle cx="13" cy="54" r="1.300" fill="#444a53"/></svg>
        </div>
        <div class="flex w-3 shrink-0 flex-col items-center bg-[#343c49] py-px">
          <svg class="h-2 w-2"><use href="#up"/></svg>
          <div class="my-auto h-2.5 w-1 rounded-full bg-[#566174]"></div>
          <svg class="h-2 w-2"><use href="#down"/></svg>
        </div>
      </div>
      <div class="flex h-[11px] shrink-0 items-center bg-[#323a47]">
        <div class="flex h-full items-center bg-[#3b4453]">
          <button class="w-[46px] font-['DejaVu_Sans',sans-serif] text-[6px]">1 : 100</button>
          <button class="flex w-[15px] justify-center" aria-label="Detail level"><svg class="h-2.5 w-2.5" viewBox="0 0 10 10"><path d="M0 1h10v8H0z" fill="#b5b2ab"/><path d="M0 3h10M0 5h10M0 7h10M2 1v8M4 1v8M6 1v8M8 1v8" stroke="#8b8a87" stroke-width=".6"/></svg></button>
          <button class="flex w-[15px] justify-center" aria-label="Visual style"><svg class="h-2.5 w-2.5" viewBox="0 0 10 10"><path d="M1 3l2-2h7v6L8 9H1z" fill="#5fa8e6"/><path d="M1 3l2-2h7L8 3z" fill="#a9d3f5"/></svg></button>
          <button class="flex w-[15px] justify-center" aria-label="Sun path"><svg class="h-2.5 w-2.5" viewBox="0 0 10 10"><circle cx="4" cy="4" r="2.200" fill="#f0c96a"/><path d="M4 0v8M0 4h8M1 1l6 6M7 1L1 7" stroke="#f0c96a" stroke-width=".6"/><use href="#bulb"/></svg></button>
          <button class="flex w-[15px] justify-center" aria-label="Shadows"><svg class="h-2.5 w-2.5" viewBox="0 0 10 10"><ellipse cx="5" cy="7.500" rx="4" ry="1.500" fill="#15191f"/><circle cx="4" cy="4" r="3.500" fill="#e4e5e7"/><use href="#bulb"/></svg></button>
          <button class="flex w-[15px] justify-center" aria-label="Crop view"><svg class="h-2.5 w-2.5" viewBox="0 0 10 10" fill="none" stroke="#a9aeb5"><path d="M3 1v7h6M0 3h8v6"/><path d="M6 6l3.500 3.500M9.500 6L6 9.500" stroke="#dc4c4c"/></svg></button>
          <button class="flex w-[15px] justify-center" aria-label="Crop region"><svg class="h-2.5 w-2.5" viewBox="0 0 10 10"><path d="M3 1v7h4M0 3h8" fill="none" stroke="#a9aeb5"/><use href="#bulb"/></svg></button>
          <button class="flex w-[15px] justify-center" aria-label="Hide"><svg class="h-2.5 w-2.5" viewBox="0 0 10 10" fill="none" stroke="#c5c9cf"><circle cx="2.500" cy="6" r="1.700"/><circle cx="7" cy="6" r="1.700"/><path d="M3 4l2-1.500M7.500 4l2-1.500"/></svg></button>
          <button class="flex w-[15px] justify-center" aria-label="Reveal hidden"><svg class="h-2.5 w-2.5" viewBox="0 0 10 10"><circle cx="5" cy="3.500" r="2.800" fill="#7fd0dc"/><path d="M4 6h2v3.500H4z" fill="#d8dadd"/></svg></button>
          <button class="flex w-[15px] justify-center" aria-label="Temporary view"><svg class="h-2.5 w-2.5" viewBox="0 0 10 10"><path d="M1 1h5v5H1z" fill="#c5c9cf"/><path d="M4 4h5v5H4z" fill="#3b4453" stroke="#a9aeb5" stroke-dasharray="1.500 1"/></svg></button>
          <button class="flex w-[15px] justify-center" aria-label="Analytical model"><svg class="h-2.5 w-2.5" viewBox="0 0 10 10"><path d="M0 2h8M0 5h6M1 0v9M4 0v9" stroke="#c0a0a2"/><use href="#bulb"/></svg></button>
          <button class="flex w-[15px] justify-center" aria-label="Constraints"><svg class="h-2.5 w-2.5" viewBox="0 0 10 10"><path d="M0 4h9M1 2v5M7 2v2" stroke="#c5c9cf"/><use href="#bulb"/></svg></button>
          <svg class="h-2 w-2" viewBox="0 0 8 8"><path d="M5.500 1.500L3 4l2.500 2.500" fill="none" stroke="#a5adb8"/></svg>
        </div>
        <div class="flex flex-1 justify-center"><i class="h-[3px] w-2.5 rounded-full bg-[#566174]"></i></div>
        <svg class="mr-3 h-2 w-2" viewBox="0 0 8 8"><path d="M2.500 1.500L5 4 2.500 6.500" fill="none" stroke="#a5adb8"/></svg>
      </div>
    </section>

    <!-- Project browser -->
    <aside class="flex w-[232px] shrink-0 flex-col border-l-2 border-[#4b5567]">
      <div class="flex h-[11px] shrink-0 items-center justify-between bg-[#222933] pl-0.5"><h2>Project Browser - Building E Architect</h2><button aria-label="Close browser"><svg class="h-2 w-2"><use href="#x"/></svg></button></div>
      <label class="mx-[5px] mt-1 flex h-3.5 shrink-0 items-center gap-1 bg-[#2c343f] pl-1"><svg class="h-3 w-3" viewBox="0 0 12 12" fill="none" stroke="#a5adb8" stroke-width="1.200"><circle cx="5" cy="5" r="3.500"/><path d="M7.500 7.500L11 11"/></svg><input type="search" aria-label="Search" placeholder="Search" class="w-full bg-transparent outline-none placeholder:text-[#98a0ab]"></label>
      <div class="mt-1.5 flex min-h-0 flex-1">
        <ul id="tree" class="grid min-h-0 flex-1 auto-rows-fr whitespace-nowrap"></ul>
        <div class="flex w-[9px] shrink-0 flex-col items-center bg-[#343c49] py-px">
          <svg class="h-2 w-2"><use href="#up"/></svg>
          <div class="mt-12 h-[54px] w-1 rounded-full bg-[#4c586a]"></div>
          <svg class="mt-auto h-2 w-2"><use href="#down"/></svg>
        </div>
      </div>
    </aside>
  </main>

  <!-- Status bar -->
  <footer class="flex h-[7px] shrink-0 items-start overflow-hidden border-t border-[#4b5567] pl-0.5 whitespace-nowrap">
    <span class="mt-0.5 w-[338px]">Click to select, TAB for alternates, CTRL adds, SHIFT</span>
    <svg class="mt-[3px] h-3 w-3 shrink-0" viewBox="0 0 12 12"><circle cx="3" cy="3" r="2.500" fill="#6fb2e2"/><circle cx="7" cy="2" r="2" fill="#e09a6a"/></svg>
    <svg class="mt-[3px] ml-[138px] h-3 w-14 shrink-0" viewBox="0 0 56 12"><path d="M0 0h5v12H0z" fill="#8d939c"/><path d="M25 0h11v12H25z" fill="#dcdddf"/><path d="M42 0h9v12h-9z" fill="#8d939c"/></svg>
    <svg class="mt-[3px] mr-9 ml-auto h-3 w-[106px] shrink-0" viewBox="0 0 106 12" fill="none"><path d="M1 1h3v3H1zM6 1h3v3H6z" stroke="#d0a58a"/><path d="M16 3l4-3 2 5z" fill="#6fb2e2"/><path d="M21 0l4 4M25 0l-4 4" stroke="#dc5c5c"/><path d="M31 0h6M34 0v4" stroke="#dcdddf" stroke-width="2"/><path d="M45 3l4-3 2 5z" fill="#6fb2e2"/><path d="M50 0l4 4M54 0l-4 4" stroke="#dc5c5c"/><path d="M64 0v5M61 3h6" stroke="#a5adb8"/><circle cx="79" cy="4" r="3" stroke="#7a818b"/><path d="M88 0h11l-4 4h-3z" fill="#dcdddf"/><path d="M102 2h3" stroke="#dcdddf"/></svg>
  </footer>
</div>

<!-- Overlays -->
<div class="absolute top-[75px] left-[771px] flex h-[21px] w-[76px] overflow-hidden rounded-[4px] bg-[#e2edff]">
  <div class="flex w-[26px] items-center justify-center bg-[#2a6cf0]"><svg class="h-3.5 w-4" viewBox="0 0 16 14"><path d="M3 0h10l3 3v3h-2v5l-2 3H4l-2-3V6H0V3z" fill="#fff"/><path d="M3 4h10M6.500 4v6h3V4" fill="none" stroke="#2a6cf0" stroke-width="1.500"/></svg></div>
  <span class="flex-1 text-center font-['Lato',sans-serif] text-[10px] leading-[21px] font-bold text-[#3c73dd]">TeraBox</span>
</div>
<div class="absolute top-[13px] left-[813px] flex items-end gap-0.5 font-['Liberation_Sans',sans-serif] text-[14px] leading-[18px] font-bold whitespace-nowrap text-[#1a9fe0] [filter:drop-shadow(1px_0_0_white)_drop-shadow(-1px_0_0_white)_drop-shadow(0_1px_0_white)_drop-shadow(0_-1px_0_white)]">
  <span class="rounded-[3px] border-t-4 border-[#46bdf0] bg-[#1a9fe0] text-[16px] leading-5 text-white">File</span><span>Thiết Kế<span class="text-[12px]">.vn</span></span>
</div>
<div class="pointer-events-none absolute inset-x-0 top-[459px] text-center font-['Liberation_Sans',sans-serif] text-[21px] leading-6 font-bold text-[#b4b4b2] [text-shadow:1px_1px_1px_#222,-1px_0_1px_#333]">Copyright © FileThietKe.vn</div>

<script>
const use = (id, cls) => `<svg class="${cls}"><use href="#${id}"/></svg>`;

// Property rows: [kind, label, value]
const props = [
  ['head','Graphics'],['input','View Scale','1 : 100'],['off','Scale Value &nbsp; &nbsp;1:','100'],
  ['text','Display Model','Normal'],['text','Detail Level','Fine'],['text','Parts Visibility','Show Original'],
  ['btn','Visibility/Graphics Ov...','Edit...'],['btn','Graphic Display Opti...','Edit...'],
  ['text','Orientation','Project North'],['off','Wall Join Display','Clean all wall joins'],
  ['text','Discipline','Coordination'],['text','Show Hidden Lines','By Discipline'],
  ['text','Color Scheme Location','Background'],['btn','Color Scheme','&lt;none&gt;'],
  ['btn','System Color Schemes','Edit...'],['text','Default Analysis Disp...','None'],['check','Sun Path'],
  ['head','Underlay'],['text','Range: Base Level','None'],['off','Range: Top Level','Unbounded'],
  ['off','Underlay Orientation','Look down'],['head','Extents'],['check','Crop View'],
  ['check','Crop Region Visible'],['check','Annotation Crop']
];
document.getElementById('props').innerHTML = props.map(([kind, label, value], i) => {
  if (kind === 'head') return `<h3 class="flex items-center justify-between bg-[#222933] pr-px pl-px">${label}${use('collapse','h-2 w-2')}</h3>`;
  const control = {
    input: `<input id="p${i}" value="${value}" class="h-[11px] w-20 border border-[#8b929c] bg-transparent pl-0.5">`,
    btn: `<button id="p${i}" class="h-[11px] w-20 border border-[#66748a] leading-[9px]">${value}</button>`,
    check: `<input id="p${i}" type="checkbox" class="ml-0.5 block h-[7px] w-[7px] appearance-none border border-[#8b929c]">`,
    text: `<output id="p${i}" class="pl-px">${value}</output>`,
    off: `<output id="p${i}" class="pl-px">${value}</output>`
  }[kind];
  const tone = kind === 'off' ? 'text-[#7b838f]' : '';
  return `<div class="flex min-h-0 items-center border-b border-[#434c5b] ${tone}"><label for="p${i}" class="w-[81px] shrink-0 pl-[5px]">${label}</label><div class="flex h-full flex-1 items-center">${control}</div></div>`;
}).join('');

// Browser tree: [level, mark, icon, label]
const icons = {
  view: '<path d="M.5.5h9v9h-9z" fill="#dedfe0" stroke="#9aa1ab" stroke-dasharray="1.500 1"/>',
  legend: '<path d="M0 0h10v10H0z" fill="#dedfe0"/><path d="M1.500 3h3v5h-3zM5.500 3h3v5h-3zM3 3v5M7 3v5M1.500 5.500h7" fill="none" stroke="#5b626d" stroke-width=".8"/>',
  table: '<path d="M0 1h10v8H0z" fill="#dedfe0"/><path d="M0 3.500h10M0 6h10M3.300 3v6M6.600 3v6" stroke="#4a5362" stroke-width=".9"/>',
  sheet: '<path d="M0 1h7l3 3v5H0z" fill="#dedfe0"/><path d="M7 1v3h3" fill="none" stroke="#5b626d"/>',
  family: '<path d="M0 0h10v10H0z" fill="#dedfe0"/><path d="M5 0v4H0M5 4v2h5" fill="none" stroke="#4a5362"/>'
};
const tree = [
  ['v','','view','South'],['v','','view','West'],['b','-','','Sections (Building Section)'],['v','','view','Section 1'],
  ['a','','legend','Legends'],['a','','table','Schedules/Quantities (all)'],['a','','sheet','Sheets (all)'],['a','-','family','Families'],
  ...['Analytical Links','Annotation Symbols','Cable Trays','Ceilings','Columns','Conduits','Curtain Panels','Curtain Systems',
      'Curtain Wall Mullions','Detail Items','Division Profiles','Doors','Duct Systems','Ducts','Flex Ducts','Flex Pipes'].map(t => ['b','+','',t]),
  ['b','-','','Floors'],['c','+','','FD1'],['c','+','','FD-0.100x0.1'],['c','+','','FD-0.100x0.2']
];
const guide = {
  a: '<span class="w-px"></span>',
  b: '<span class="ml-1 h-full w-[7px] border-l border-dotted border-[#5a6475]"></span>',
  c: '<span class="ml-3.5 h-full w-[7px] border-l border-dotted border-[#5a6475]"></span>',
  v: '<span class="ml-3.5 h-full w-[3px] border-l border-dotted border-[#5a6475]"></span><span class="mr-px w-4 border-t border-dotted border-[#5a6475]"></span>'
};
document.getElementById('tree').innerHTML = tree.map(([level, mark, icon, label]) => {
  const sign = mark ? `<path d="M1.500 4h5${mark === '+' ? 'M4 1.500v5' : ''}" stroke="#b5bac1"/>` : '';
  const signBox = level === 'v' ? '' : `<svg class="mr-1 h-2 w-2" viewBox="0 0 8 8">${sign}</svg>`;
  const pic = icon ? `<svg class="mr-0.5 h-2.5 w-2.5" viewBox="0 0 10 10">${icons[icon]}</svg>` : '';
  return `<li class="flex min-h-0 items-center pl-px">${guide[level]}${signBox}${pic}<span>${label}</span></li>`;
}).join('');

// Scaled sheets, smallest first: [x, y, width, height]
document.getElementById('sheets').innerHTML = [
  [344.5,144.5,5,3],[344.5,150.5,6,4],[344.5,156.5,7,4],[344.5,163.5,9,6],[344.5,172.5,11,7],[344.5,182.5,22,14],
  [344.5,199.5,33,22],[344.5,224.5,43,29],[344.5,256.5,86,58],[344.5,317.5,108,72]
].map(([x,y,w,h]) => `<rect x="${x}" y="${y}" width="${w}" height="${h}"/>` +
  `<use href="#sheet" x="${x}" y="${y}" width="${w}" height="${h}"/>` +
  (w < 12 ? `<path d="M${x+1} ${y+h/2}h${w-2}" stroke="#e2e4e6" stroke-width="${h/2}" stroke-dasharray="2 1"/>` : w < 60 ?
  `<g transform="translate(${x} ${y}) scale(${w/108})" stroke="#d9dcdf" stroke-width="4"><circle cx="48" cy="14" r="10" stroke-dasharray="6 2"/><path d="M11 38v30M37 36v22" stroke-width="5" stroke-dasharray="5 3"/><path d="M60 46h22M57 34l8 6h6l6-5 8 3M60 58l8 3" stroke-width="3" stroke-dasharray="6 1"/><circle cx="89" cy="49" r="5" fill="#e2e4e6"/><path d="M100 54v-8"/></g>` : '')
).join('');

// Building plan inside its title-block sheet
let s = '<g fill="none" stroke="#b9bdc2"><path d="M503.500 220.500h117v83h-117zM606.500 220.500v83"/><path d="M481.500 249.500h22v7h-22z" stroke="#8a9097"/></g>';
let seed = 7;
const rnd = () => (seed = (seed * 16807) % 2147483647) / 2147483647;
for (const x of [507,510,513,519,522,527,532,540,545,551,558,564,570,577,582,588,590,594,601])
  s += `<path d="M${x}.5 243.500v43" stroke="#b9bdc2" stroke-width=".8"/><circle cx="${x}.5" cy="286.500" r="1.200" fill="#fff"/>`;
s += '<path d="M505 250.500h101M505 253.500h101M507 285.500h94" stroke="#dfe1e3" stroke-width=".8"/>';
s += '<path d="M505 258.500h101M505 262h101" stroke="#f0f1f2" stroke-width="2.500" opacity=".85"/><path d="M505 266h101M505 273h101M505 277h101" stroke="#dfe1e3"/>';
for (let x = 505; x < 605; x += 2) for (let y = 255; y < 284; y += 2) {
  const dense = y < 265 ? .8 : y < 278 ? .5 : .25;
  if (rnd() < dense) s += `<path d="M${x} ${y}h${(1 + rnd() * 1.5).toFixed(1)}v${(1 + rnd()).toFixed(1)}h-1.500z" fill="#eceded"/>`;
}
for (let i = 0; i < 9; i++) s += `<path d="M${508 + i * 11} 267.500h7v4.500h-7z" fill="#85878a"/>`;
s += '<path d="M517 243h7v16h-7z" fill="#dfe1e3" opacity=".75"/><path d="M516.500 242.500h11" stroke="#dfe1e3"/>';
s += '<path d="M506 274.500h8M519 274.500h8M537 274.500h17M564 274.500h9M582 274.500h9M595 274.500h9" stroke="#e6eee6" stroke-width="3"/><path d="M506 274.500h8M519 274.500h8M537 274.500h17M564 274.500h9M582 274.500h9M595 274.500h9" stroke="#4f9d4f" stroke-width="1.500"/>';
s += '<path d="M530 263h2M543 263h3M555 270h3M590 262h3" stroke="#5f93cf" stroke-width="2"/>';
s += '<path d="M507.500 286v8h94v-8M507.500 291.500h94M507 288.500h95" fill="none" stroke="#b9bdc2" stroke-width=".8"/><path d="M598 299.500h5" stroke="#a3a8ae"/>';
s += '<g fill="#e2e4e6"><path d="M610 222l3-1 4 2v4l-3 1-3-2z"/><path d="M608 231h5v1h-5zM608 234h3v3h-3zM613 236h5v1h-5zM608 239h4v2h-4z"/><path d="M608 252h12v10h-12zM608 264h12v13h-12zM608 293h12v10h-12z" opacity=".85"/></g>';
s += '<path d="M607 230.500h13M607 242.500h13M607 246.500h13M607 249.500h13M607 255.500h13M607 259.500h13M607 268.500h13M607 273.500h13M607 277.500h13M607 292.500h13M607 297.500h8" stroke="#777c83" stroke-width=".7"/><path d="M609 281.500h9M609 285.500h7" stroke="#b9bdc2" stroke-dasharray="1.500 1.500"/><path d="M616 298h4v3h-4z" fill="#222933"/>';
s += '<g fill="#e2e4e6"><circle cx="555" cy="195.500" r="1.100"/><circle cx="472" cy="262.500" r="1.100"/><circle cx="648.500" cy="271" r="1.100"/><circle cx="556" cy="329.500" r="1.100"/></g>';
document.getElementById('building').innerHTML = s;
</script>
</body>
</html>
